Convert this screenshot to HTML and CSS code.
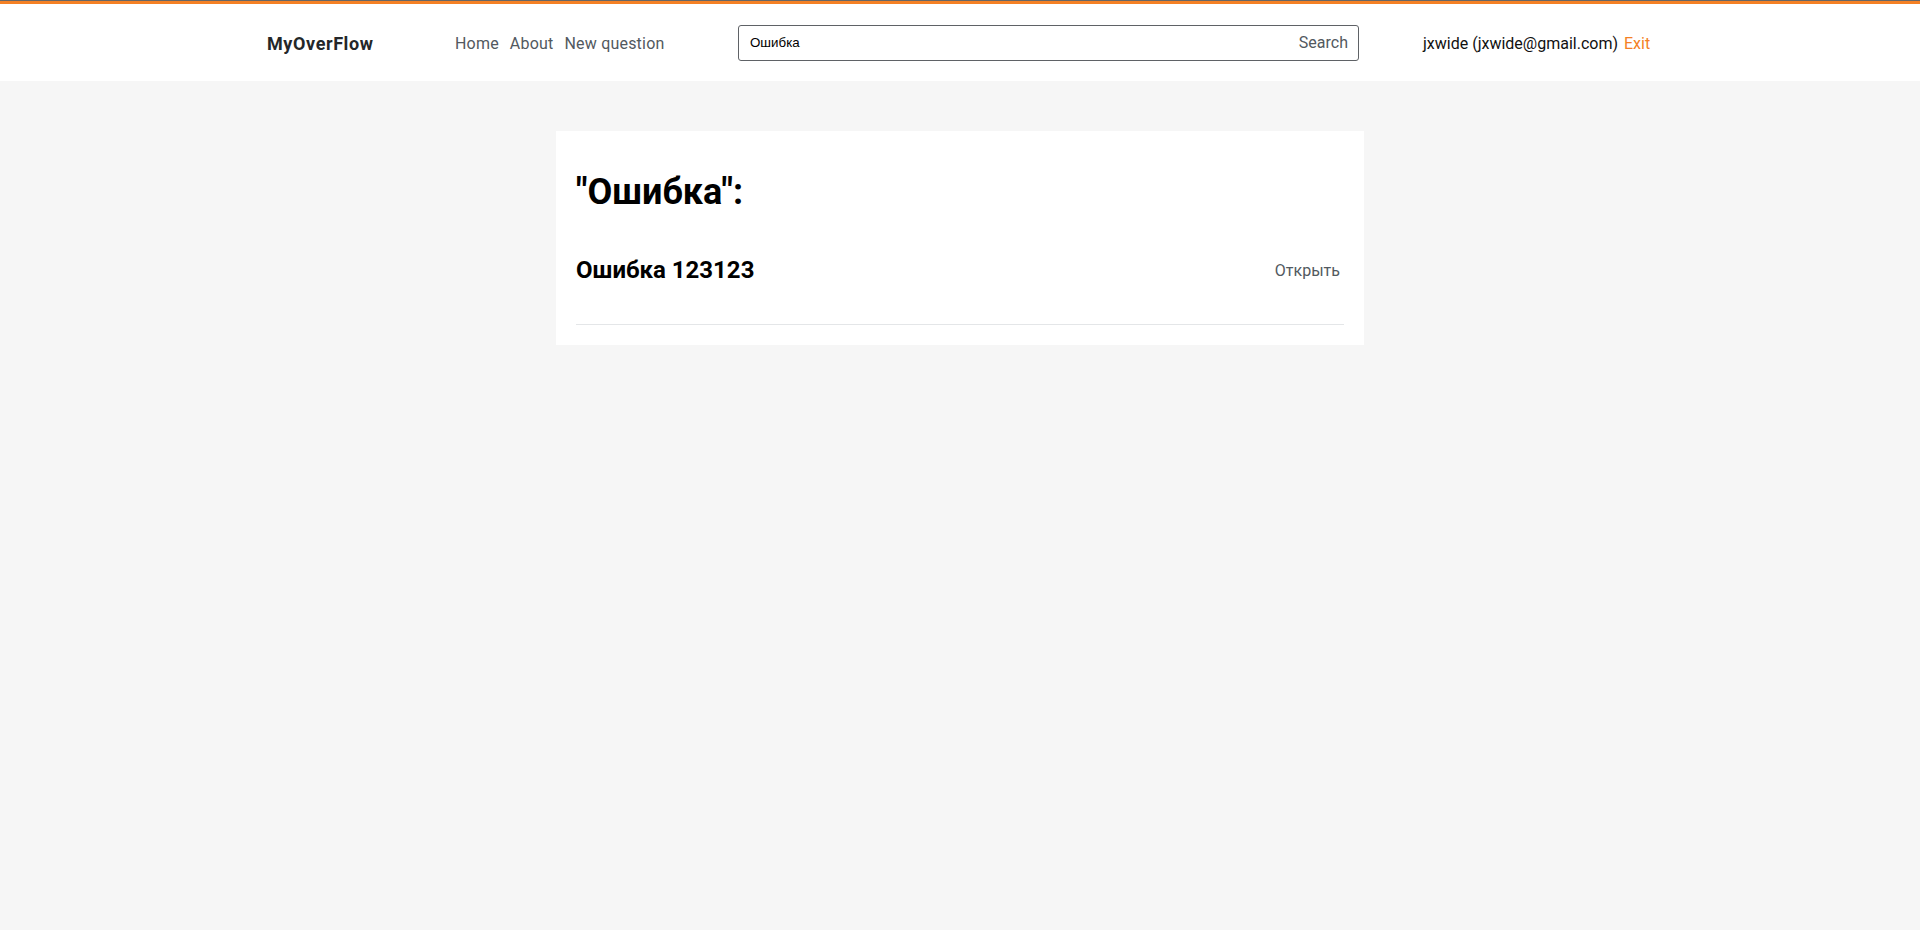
FILE: index.html
```html
<!DOCTYPE html>
<html>
<head>
    <title>MyOverFlow - Search</title>
    <link rel="stylesheet" href="styles.css">
</head>
<body>
    <div class="header">
        <div class="header-inner">
            <a class="logo" href="#">MyOverFlow</a>
            <div class="nav">
                <a href="#">Home</a>
                <a href="#">About</a>
                <a href="#">New question</a>
            </div>
            <form class="search-form">
                <input type="text" class="search-input" value="Ошибка">
                <button type="button" class="search-button">Search</button>
            </form>
            <div class="user">
                <span class="user-name">jxwide (jxwide@gmail.com)</span>
                <a class="exit" href="#">Exit</a>
            </div>
        </div>
    </div>
    <div class="content">
        <h1 class="results-title">"Ошибка":</h1>
        <div class="question">
            <h2 class="question-title">Ошибка 123123</h2>
            <a class="open-link" href="#">Открыть</a>
        </div>
        <div class="divider"></div>
    </div>
</body>
</html>
```

FILE: styles.css
```css
body {
    margin: 0;
    border-top: 1px solid #666;
    background-color: #f6f6f6;
    font-family: Roboto, 'Open Sans', sans-serif;
    color: #242729;
}
a {
    text-decoration: none;
}
.header {
    background-color: white;
    border-top: 3px solid #f48024;
    height: 77px;
}
.header-inner {
    width: 1386px;
    height: 100%;
    margin: 0 auto;
    display: flex;
    align-items: center;
}
.logo {
    width: 188px;
    padding-top: 1px;
    color: #242729;
    font-size: 18px;
    font-weight: bold;
    letter-spacing: 0.6px;
}
.nav {
    width: 283px;
    padding-top: 1px;
    display: flex;
    gap: 11px;
}
.nav a {
    color: #525960;
    font-size: 16px;
    letter-spacing: 0.2px;
}
.search-form {
    width: 621px;
    height: 36px;
    box-sizing: border-box;
    border: 1px solid #5f6266;
    border-radius: 3px;
    display: flex;
    align-items: center;
}
.search-input {
    flex: 1;
    border: none;
    outline: none;
    background: none;
    padding: 0 0 0 11px;
    font-family: 'Liberation Sans', Arial, sans-serif;
    font-size: 13.33px;
    color: black;
}
.search-button {
    border: none;
    background: none;
    padding: 0 10px;
    font-family: Roboto, 'Open Sans', sans-serif;
    font-size: 16px;
    color: #525960;
    cursor: pointer;
}
.user {
    margin-left: 64px;
    padding-top: 1px;
    font-size: 16px;
    display: flex;
    gap: 6px;
}
.user-name {
    color: #111;
}
.exit {
    color: #f48024;
}
.content {
    width: 808px;
    box-sizing: border-box;
    margin: 50px auto 0;
    padding: 20px;
    background-color: white;
}
.results-title {
    margin: 20px 0 0;
    font-size: 36px;
    line-height: 43px;
    color: black;
}
.question {
    display: flex;
    justify-content: space-between;
    align-items: center;
    padding: 42px 0 39px;
}
.question-title {
    margin: 0;
    font-size: 24px;
    line-height: 29px;
    color: black;
}
.open-link {
    margin-right: 4px;
    color: #525960;
    font-size: 16px;
}
.divider {
    height: 1px;
    background-color: #e4e6e8;
}
```
